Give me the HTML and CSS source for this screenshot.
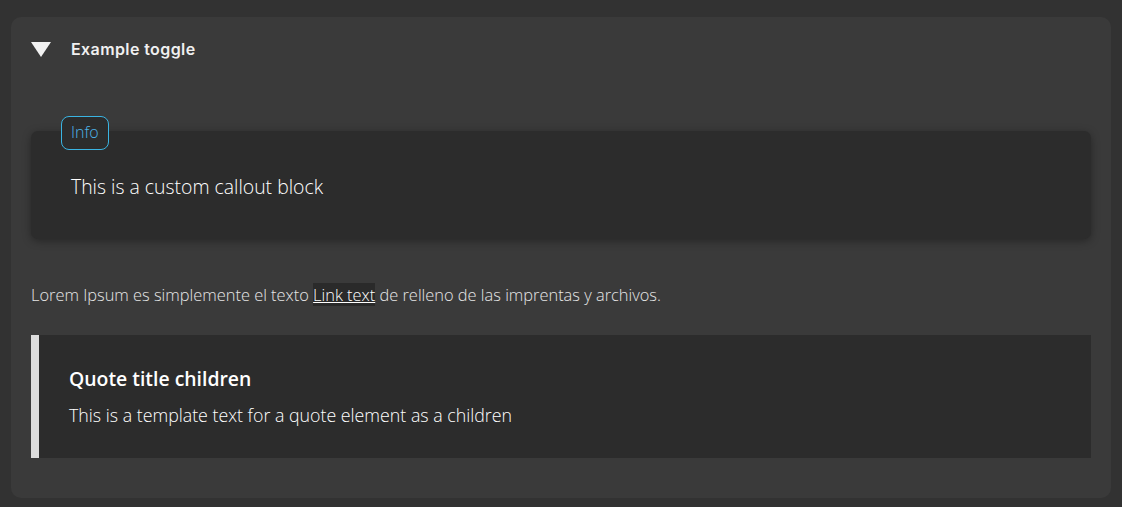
FILE: index.html
```html
<!DOCTYPE html>
<html lang="es">
<head>
<meta charset="utf-8">
<link rel="stylesheet" href="styles.css">
</head>
<body>
<div class="toggle">
  <div class="toggle-head">
    <svg class="tri" width="20" height="16" viewBox="0 0 20 16"><polygon points="0,0 20,0 10,15" fill="#f2f2f2"/></svg>
    <span class="toggle-title">Example toggle</span>
  </div>
  <div class="toggle-body">
    <div class="callout">
      <span class="badge">Info</span>
      <p class="callout-text">This is a custom callout block</p>
    </div>
    <p class="para">Lorem Ipsum es simplemente el texto <a class="link" href="#">Link text</a> de relleno de las imprentas y archivos.</p>
    <blockquote class="quote">
      <h3 class="quote-title">Quote title children</h3>
      <p class="quote-text">This is a template text for a quote element as a children</p>
    </blockquote>
  </div>
</div>
</body>
</html>
```
FILE: styles.css
```css
html, body { margin: 0; padding: 0; }
body {
  background: #323232;
  padding: 17px 11px 10px 11px;
  font-family: "Open Sans", "Segoe UI", sans-serif;
  color: #f0f0f0;
}
.toggle {
  background: #3a3a3a;
  border-radius: 10px;
  padding: 20px 20px 40px 20px;
}
.toggle-head {
  display: flex;
  align-items: center;
  height: 24px;
}
.tri { margin-top: 2px; }
.toggle-title {
  margin-left: 20px;
  font-family: "Inter", "Roboto", sans-serif;
  font-weight: 600;
  font-size: 16px;
  letter-spacing: 0.4px;
  color: #f0f0f0;
}
.toggle-body { padding-top: 70px; }
.callout {
  position: relative;
  background: #2c2c2c;
  border-radius: 7px;
  box-shadow: 0 2px 8px rgba(0,0,0,0.35);
  padding: 42px 40px 38px 40px;
}
.badge {
  position: absolute;
  left: 30px;
  top: -15px;
  padding: 4px 9px 6px;
  border: 1px solid #3ab4e2;
  border-radius: 8px;
  background: #2c2c2c;
  color: #4cb4ea;
  font-weight: 300;
  font-size: 16px;
  line-height: 22px;
}
.callout-text {
  margin: 0;
  font-weight: 300;
  font-size: 19.4px;
  line-height: 28px;
  color: #ffffff;
}
.para {
  margin: 44px 0 0 0;
  font-weight: 300;
  font-size: 16.4px;
  line-height: 24px;
  color: #e6e6e6;
}
.link {
  color: #ffffff;
  background: #2a2a2a;
  text-decoration: underline;
}
.quote {
  margin: 28px 0 0 0;
  background: #2c2c2c;
  border-left: 8px solid #dcdcdc;
  padding: 31px 30px 30px 30px;
}
.quote-title {
  margin: 0;
  font-weight: 600;
  font-size: 19.4px;
  line-height: 26px;
  color: #ffffff;
}
.quote-text {
  margin: 10px 0 0 0;
  font-weight: 300;
  font-size: 17.8px;
  line-height: 26px;
  color: #ffffff;
}
```
